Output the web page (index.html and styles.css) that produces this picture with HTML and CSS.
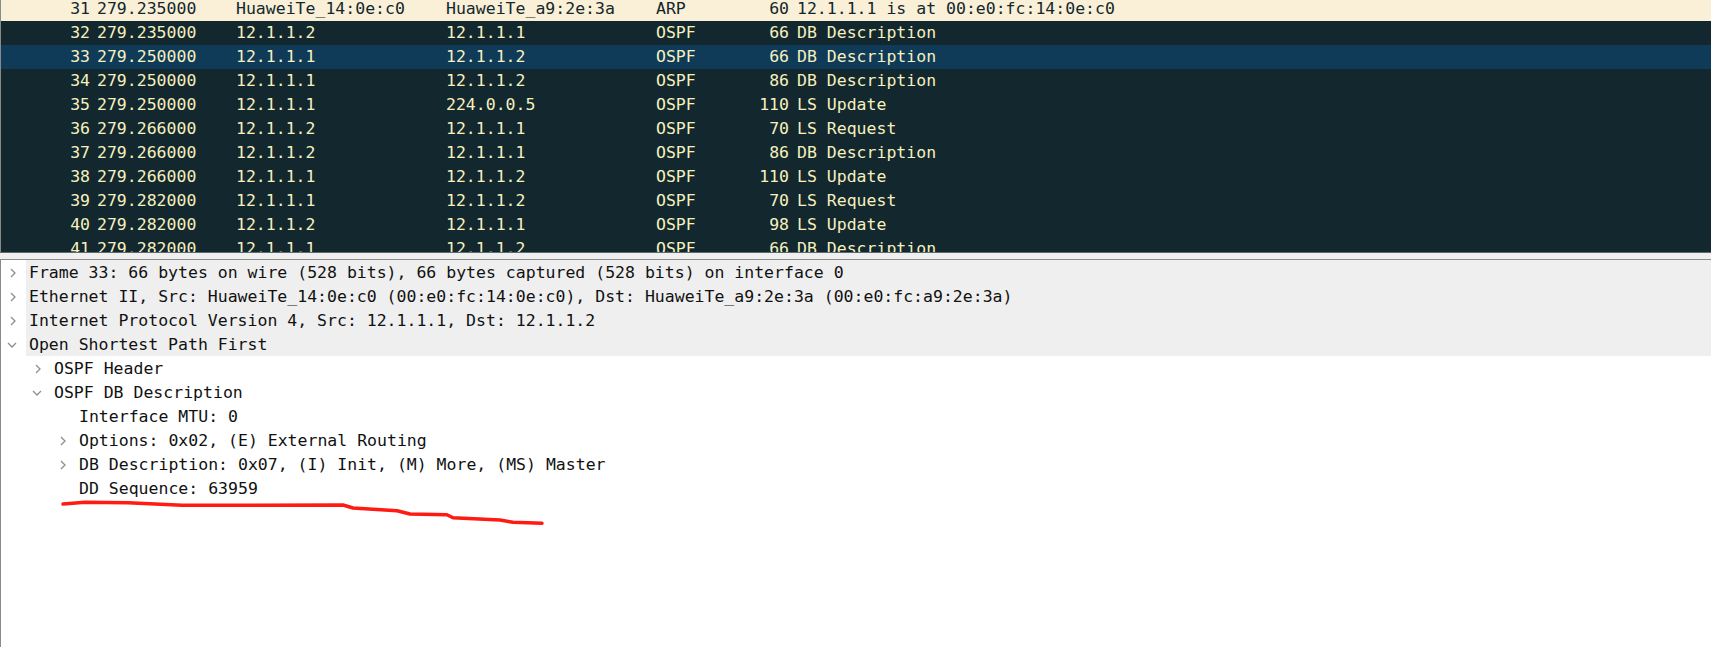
FILE: index.html
```html
<!DOCTYPE html>
<html>
<head>
<meta charset="utf-8">
<link rel="stylesheet" href="styles.css">
</head>
<body>
<div class="app">
  <div class="packet-list">
    <div class="rows">
      <div class="pkt arp"><span class="c num">31</span><span class="c time">279.235000</span><span class="c">HuaweiTe_14:0e:c0</span><span class="c">HuaweiTe_a9:2e:3a</span><span class="c">ARP</span><span class="c len">60</span><span class="c">12.1.1.1 is at 00:e0:fc:14:0e:c0</span></div>
      <div class="pkt"><span class="c num">32</span><span class="c time">279.235000</span><span class="c">12.1.1.2</span><span class="c">12.1.1.1</span><span class="c">OSPF</span><span class="c len">66</span><span class="c">DB Description</span></div>
      <div class="pkt sel"><span class="c num">33</span><span class="c time">279.250000</span><span class="c">12.1.1.1</span><span class="c">12.1.1.2</span><span class="c">OSPF</span><span class="c len">66</span><span class="c">DB Description</span></div>
      <div class="pkt"><span class="c num">34</span><span class="c time">279.250000</span><span class="c">12.1.1.1</span><span class="c">12.1.1.2</span><span class="c">OSPF</span><span class="c len">86</span><span class="c">DB Description</span></div>
      <div class="pkt"><span class="c num">35</span><span class="c time">279.250000</span><span class="c">12.1.1.1</span><span class="c">224.0.0.5</span><span class="c">OSPF</span><span class="c len">110</span><span class="c">LS Update</span></div>
      <div class="pkt"><span class="c num">36</span><span class="c time">279.266000</span><span class="c">12.1.1.2</span><span class="c">12.1.1.1</span><span class="c">OSPF</span><span class="c len">70</span><span class="c">LS Request</span></div>
      <div class="pkt"><span class="c num">37</span><span class="c time">279.266000</span><span class="c">12.1.1.2</span><span class="c">12.1.1.1</span><span class="c">OSPF</span><span class="c len">86</span><span class="c">DB Description</span></div>
      <div class="pkt"><span class="c num">38</span><span class="c time">279.266000</span><span class="c">12.1.1.1</span><span class="c">12.1.1.2</span><span class="c">OSPF</span><span class="c len">110</span><span class="c">LS Update</span></div>
      <div class="pkt"><span class="c num">39</span><span class="c time">279.282000</span><span class="c">12.1.1.1</span><span class="c">12.1.1.2</span><span class="c">OSPF</span><span class="c len">70</span><span class="c">LS Request</span></div>
      <div class="pkt"><span class="c num">40</span><span class="c time">279.282000</span><span class="c">12.1.1.2</span><span class="c">12.1.1.1</span><span class="c">OSPF</span><span class="c len">98</span><span class="c">LS Update</span></div>
      <div class="pkt"><span class="c num">41</span><span class="c time">279.282000</span><span class="c">12.1.1.1</span><span class="c">12.1.1.2</span><span class="c">OSPF</span><span class="c len">66</span><span class="c">DB Description</span></div>
    </div>
  </div>
  <div class="splitter"></div>
  <div class="details">
    <div class="node top">
      <span class="tog closed"><svg width="6" height="10" viewBox="0 0 6 10"><polyline points="1,1 5,5 1,9"/></svg></span>
      <span class="label">Frame 33: 66 bytes on wire (528 bits), 66 bytes captured (528 bits) on interface 0</span>
    </div>
    <div class="node top">
      <span class="tog closed"><svg width="6" height="10" viewBox="0 0 6 10"><polyline points="1,1 5,5 1,9"/></svg></span>
      <span class="label">Ethernet II, Src: HuaweiTe_14:0e:c0 (00:e0:fc:14:0e:c0), Dst: HuaweiTe_a9:2e:3a (00:e0:fc:a9:2e:3a)</span>
    </div>
    <div class="node top">
      <span class="tog closed"><svg width="6" height="10" viewBox="0 0 6 10"><polyline points="1,1 5,5 1,9"/></svg></span>
      <span class="label">Internet Protocol Version 4, Src: 12.1.1.1, Dst: 12.1.1.2</span>
    </div>
    <div class="node top">
      <span class="tog open"><svg width="10" height="6" viewBox="0 0 10 6"><polyline points="1,1 5,5 9,1"/></svg></span>
      <span class="label">Open Shortest Path First</span>
    </div>
    <div class="node l1">
      <span class="tog closed"><svg width="6" height="10" viewBox="0 0 6 10"><polyline points="1,1 5,5 1,9"/></svg></span>
      <span class="label">OSPF Header</span>
    </div>
    <div class="node l1">
      <span class="tog open"><svg width="10" height="6" viewBox="0 0 10 6"><polyline points="1,1 5,5 9,1"/></svg></span>
      <span class="label">OSPF DB Description</span>
    </div>
    <div class="node l2">
      <span class="tog"></span>
      <span class="label">Interface MTU: 0</span>
    </div>
    <div class="node l2">
      <span class="tog closed"><svg width="6" height="10" viewBox="0 0 6 10"><polyline points="1,1 5,5 1,9"/></svg></span>
      <span class="label">Options: 0x02, (E) External Routing</span>
    </div>
    <div class="node l2">
      <span class="tog closed"><svg width="6" height="10" viewBox="0 0 6 10"><polyline points="1,1 5,5 1,9"/></svg></span>
      <span class="label">DB Description: 0x07, (I) Init, (M) More, (MS) Master</span>
    </div>
    <div class="node l2">
      <span class="tog"></span>
      <span class="label">DD Sequence: 63959</span>
    </div>
  </div>
</div>
<svg class="markup" width="1711" height="647" viewBox="0 0 1711 647">
  <polyline points="63,504 85,502.3 128,502.7 155,504 182,505.3 343,505 353,508 397,510.7 410,514 447,514.7 453,517.7 500,520 513,522.3 542,523.3"/>
</svg>
</body>
</html>
```

FILE: styles.css
```css
html, body {
  margin: 0;
  padding: 0;
  background: #ffffff;
  overflow: hidden;
}
body {
  width: 1711px;
  height: 647px;
  position: relative;
  font-family: "DejaVu Sans Mono", "Liberation Mono", monospace;
  font-size: 16.5px;
}
.app {
  display: flex;
  flex-direction: column;
  height: 647px;
}
.packet-list {
  height: 252px;
  flex: none;
  background: #12272e;
  border-left: 1px solid #8a8a8a;
  overflow: hidden;
}
.rows {
  margin-top: -3px;
}
.pkt {
  display: grid;
  grid-template-columns: 93px 138px 210px 210px 70px 71px 1fr;
  height: 24px;
  line-height: 24px;
  color: #f6f0bf;
  background: #12272e;
  white-space: nowrap;
}
.pkt.arp {
  background: #faf0d7;
  color: #12272e;
}
.pkt.sel {
  background: #0f3a58;
}
.c {
  padding-left: 4px;
  overflow: hidden;
}
.c.num {
  text-align: right;
  padding-left: 0;
  padding-right: 4px;
}
.c.time {
  padding-left: 3px;
}
.c.len {
  text-align: right;
  padding-left: 0;
  padding-right: 4px;
}
.splitter {
  height: 6px;
  flex: none;
  background: #efefef;
  border-top: 1px solid #5d6a70;
}
.details {
  flex: 1;
  border-top: 1px solid #8c8c8c;
  border-left: 1px solid #8a8a8a;
  background: #ffffff;
  color: #111111;
}
.node {
  display: flex;
  height: 24px;
  white-space: nowrap;
}
.node.l1 { padding-left: 25px; }
.node.l2 { padding-left: 50px; }
.tog {
  width: 25px;
  flex: none;
  display: flex;
  align-items: center;
  box-sizing: border-box;
  padding-top: 1px;
}
.tog.closed { padding-left: 9px; }
.tog.open { padding-left: 6px; padding-top: 2px; }
.tog svg polyline {
  fill: none;
  stroke: #8e8e8e;
  stroke-width: 1.3;
}
.label {
  flex: 1;
  padding-left: 3px;
  padding-top: 2px;
  line-height: 22px;
  box-sizing: border-box;
}
.node.top .label {
  background: #efefef;
}
.markup {
  position: absolute;
  left: 0;
  top: 0;
  pointer-events: none;
}
.markup polyline {
  fill: none;
  stroke: #ff1a12;
  stroke-width: 3.5;
  stroke-linejoin: round;
  stroke-linecap: round;
}
```
